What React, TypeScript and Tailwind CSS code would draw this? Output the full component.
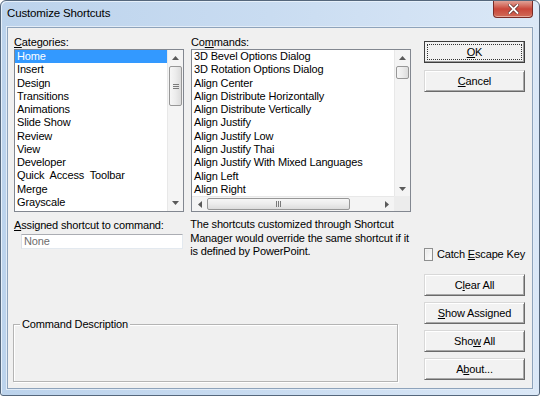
import React from "react";

const categories = [
  "Home",
  "Insert",
  "Design",
  "Transitions",
  "Animations",
  "Slide Show",
  "Review",
  "View",
  "Developer",
  "Quick  Access  Toolbar",
  "Merge",
  "Grayscale",
];

const commands = [
  "3D Bevel Options Dialog",
  "3D Rotation Options Dialog",
  "Align Center",
  "Align Distribute Horizontally",
  "Align Distribute Vertically",
  "Align Justify",
  "Align Justify Low",
  "Align Justify Thai",
  "Align Justify With Mixed Languages",
  "Align Left",
  "Align Right",
];

function Arrow({ dir }: { dir: "up" | "down" | "left" | "right" }) {
  const pts: Record<string, string> = {
    up: "0,4 3.5,0 7,4",
    down: "0,0 3.5,4 7,0",
    left: "4,0 0,3.5 4,7",
    right: "0,0 4,3.5 0,7",
  };
  const vertical = dir === "up" || dir === "down";
  return (
    <svg width={vertical ? 7 : 4} height={vertical ? 4 : 7} viewBox={vertical ? "0 0 7 4" : "0 0 4 7"}>
      <polygon points={pts[dir]} fill="#5a5a5a" />
    </svg>
  );
}

function VThumb({ h, grip }: { h: number; grip?: boolean }) {
  return (
    <div
      className="mx-[1px] rounded-[2px] border border-[#979797] bg-gradient-to-r from-[#f6f6f6] via-[#ececec] to-[#dcdcdc] flex items-center justify-center"
      style={{ height: h }}
    >
      {grip && (
        <div className="flex flex-col gap-[1px]">
          <div className="w-[6px] h-[1px] bg-[#7a7a7a]" />
          <div className="w-[6px] h-[1px] bg-[#7a7a7a]" />
          <div className="w-[6px] h-[1px] bg-[#7a7a7a]" />
        </div>
      )}
    </div>
  );
}

function U({ children }: { children: React.ReactNode }) {
  return <span className="underline underline-offset-[1px] decoration-[1px]">{children}</span>;
}

function Btn({ children, def }: { children: React.ReactNode; def?: boolean }) {
  if (def) {
    return (
      <div className="h-[22px] w-[101px] border border-[#3e3e3e] bg-[#f2f2f2] p-[2px] shadow-[inset_-1px_-1px_0_#9a9a9a]">
        <div className="h-full w-full border border-dotted border-[#333] flex items-center justify-center text-black">
          {children}
        </div>
      </div>
    );
  }
  return (
    <div className="h-[22px] w-[101px] border border-t-[#d8d8d8] border-l-[#d8d8d8] border-b-[#6a6a6a] border-r-[#6a6a6a] bg-[#f2f2f2] shadow-[inset_1px_1px_0_#ffffff,inset_-1px_-1px_0_#a8a8a8] flex items-center justify-center text-black">
      {children}
    </div>
  );
}

export default function App() {
  return (
    <div className="w-[540px] h-[396px] bg-white font-['Liberation_Sans',Arial,sans-serif] text-[11px] tracking-[-0.15px] text-black">
      <div className="h-full w-full flex flex-col rounded-t-[6px] rounded-b-[3px] border border-[#55677c] bg-gradient-to-r from-[#bcd3ec] via-[#c9dcf1] to-[#dbe8f7] shadow-[inset_1px_1px_0_#e6f0fa]">
        {/* Title bar */}
        <div className="h-[26px] flex items-start">
          <div className="pl-[6px] pt-[5px] text-[11.5px] leading-[14px] text-black">Customize Shortcuts</div>
          <div className="ml-auto mr-[6px] w-[40px] h-[17px] rounded-b-[4px] border border-t-0 border-[#7a2b26] bg-gradient-to-b from-[#e0a197] via-[#c9463a] to-[#d06a58] flex items-center justify-center shadow-[inset_0_-1px_0_#e7a89a]">
            <svg width="11" height="10" viewBox="0 0 11 10">
              <path d="M1.5 1 L9.5 9 M9.5 1 L1.5 9" stroke="#5b2a25" strokeWidth="3.2" strokeLinecap="square" />
              <path d="M1.5 1 L9.5 9 M9.5 1 L1.5 9" stroke="#ffffff" strokeWidth="1.8" strokeLinecap="square" />
            </svg>
          </div>
        </div>

        {/* Client area */}
        <div className="mx-[6px] mb-[6px] flex-1 border border-[#8ea3bb] bg-[#f0f0f0] flex pl-[6px] pt-[7px] shadow-[0_0_0_1px_#e2ecf7]">
          {/* Left + middle */}
          <div className="w-[397px] flex flex-col">
            <div className="flex gap-[7px]">
              {/* Categories */}
              <div className="w-[170px] flex flex-col">
                <div className="h-[14px] leading-[14px]">
                  <U>C</U>ategories:
                </div>
                <div className="h-[163px] border border-[#828790] bg-white flex">
                  <div className="flex-1 pt-0">
                    {categories.map((c, i) => (
                      <div
                        key={c}
                        className={
                          i === 0
                            ? "h-[13.27px] leading-[13.27px] pl-[2px] bg-[#3399ff] text-white whitespace-pre"
                            : "h-[13.27px] leading-[13.27px] pl-[2px] whitespace-pre"
                        }
                      >
                        {c}
                      </div>
                    ))}
                  </div>
                  <div className="w-[16px] bg-[#f4f4f4] border-l border-[#e8e8e8] flex flex-col">
                    <div className="h-[16px] flex items-center justify-center">
                      <Arrow dir="up" />
                    </div>
                    <VThumb h={40} grip />
                    <div className="flex-1" />
                    <div className="h-[16px] flex items-center justify-center">
                      <Arrow dir="down" />
                    </div>
                  </div>
                </div>
              </div>

              {/* Commands */}
              <div className="w-[220px] flex flex-col">
                <div className="h-[14px] leading-[14px]">
                  Co<U>m</U>mands:
                </div>
                <div className="h-[163px] border border-[#828790] bg-white flex flex-col">
                  <div className="flex flex-1">
                    <div className="flex-1 pl-[2px]">
                      {commands.map((c) => (
                        <div key={c} className="h-[13.3px] leading-[13.3px] whitespace-nowrap">
                          {c}
                        </div>
                      ))}
                    </div>
                    <div className="w-[16px] bg-[#f4f4f4] border-l border-[#e8e8e8] flex flex-col">
                      <div className="h-[16px] flex items-center justify-center">
                        <Arrow dir="up" />
                      </div>
                      <VThumb h={13} />
                      <div className="flex-1" />
                      <div className="h-[12px] flex items-start justify-center pt-[3px]">
                        <Arrow dir="down" />
                      </div>
                    </div>
                  </div>
                  <div className="h-[16px] flex">
                    <div className="flex-1 bg-[#f4f4f4] border-t border-[#e8e8e8] flex items-center">
                      <div className="w-[15px] flex items-center justify-center">
                        <Arrow dir="left" />
                      </div>
                      <div className="w-[143px] h-[12px] rounded-[2px] border border-[#979797] bg-gradient-to-b from-[#f6f6f6] via-[#ececec] to-[#dcdcdc] flex items-center justify-center gap-[1px]">
                        <div className="w-[1px] h-[6px] bg-[#7a7a7a]" />
                        <div className="w-[1px] h-[6px] bg-[#7a7a7a]" />
                        <div className="w-[1px] h-[6px] bg-[#7a7a7a]" />
                      </div>
                      <div className="flex-1" />
                      <div className="w-[15px] flex items-center justify-center">
                        <Arrow dir="right" />
                      </div>
                    </div>
                    <div className="w-[16px] bg-[#ececec]" />
                  </div>
                </div>
              </div>
            </div>

            {/* Second row */}
            <div className="flex gap-[7px] mt-[5px]">
              <div className="w-[170px] flex flex-col">
                <div className="h-[14px] leading-[14px] mt-[1px]">
                  <U>A</U>ssigned shortcut to command:
                </div>
                <div className="ml-[7px] mt-[2px] w-[162px] h-[15px] border border-t-[#abadb3] border-l-[#dbdfe6] border-r-[#e3e9ef] border-b-[#e3e9ef] bg-white pl-[2px] leading-[13px] text-[#6d6d6d]">
                  None
                </div>
              </div>
              <div className="w-[222px] leading-[13.5px] pt-[1px]">
                The shortcuts customized through Shortcut Manager would override the same shortcut if it is defined by PowerPoint.
              </div>
            </div>

            {/* Group box */}
            <div className="mt-[65px] ml-[-1px] w-[385px] h-[58px] border border-[#b4b4b4] shadow-[inset_1px_1px_0_#ffffff,1px_1px_0_#ffffff] relative">
              <div className="absolute left-[6px] top-[-8px] px-[2px] bg-[#f0f0f0] leading-[14px]">
                Command Description
              </div>
            </div>
          </div>

          {/* Right column */}
          <div className="ml-[13px] w-[101px] flex flex-col">
            <div className="mt-[6px]">
              <Btn def>
                <span>
                  <U>O</U>K
                </span>
              </Btn>
            </div>
            <div className="mt-[7px]">
              <Btn>
                <span>
                  <U>C</U>ancel
                </span>
              </Btn>
            </div>
            <div className="mt-[156px] flex items-center h-[13px]">
              <div className="w-[13px] h-[13px] border border-[#8e8f8f] bg-gradient-to-br from-[#e6e6e6] to-[#ffffff] shadow-[inset_0_0_0_1px_#f4f4f4]" />
              <div className="ml-[4px] whitespace-nowrap">
                Catch <U>E</U>scape Key
              </div>
            </div>
            <div className="mt-[13px] flex flex-col gap-[6px]">
              <Btn>
                <span>
                  C<U>l</U>ear All
                </span>
              </Btn>
              <Btn>
                <span>
                  <U>S</U>how Assigned
                </span>
              </Btn>
              <Btn>
                <span>
                  Sho<U>w</U> All
                </span>
              </Btn>
              <Btn>
                <span>
                  A<U>b</U>out...
                </span>
              </Btn>
            </div>
          </div>
        </div>
      </div>
    </div>
  );
}
